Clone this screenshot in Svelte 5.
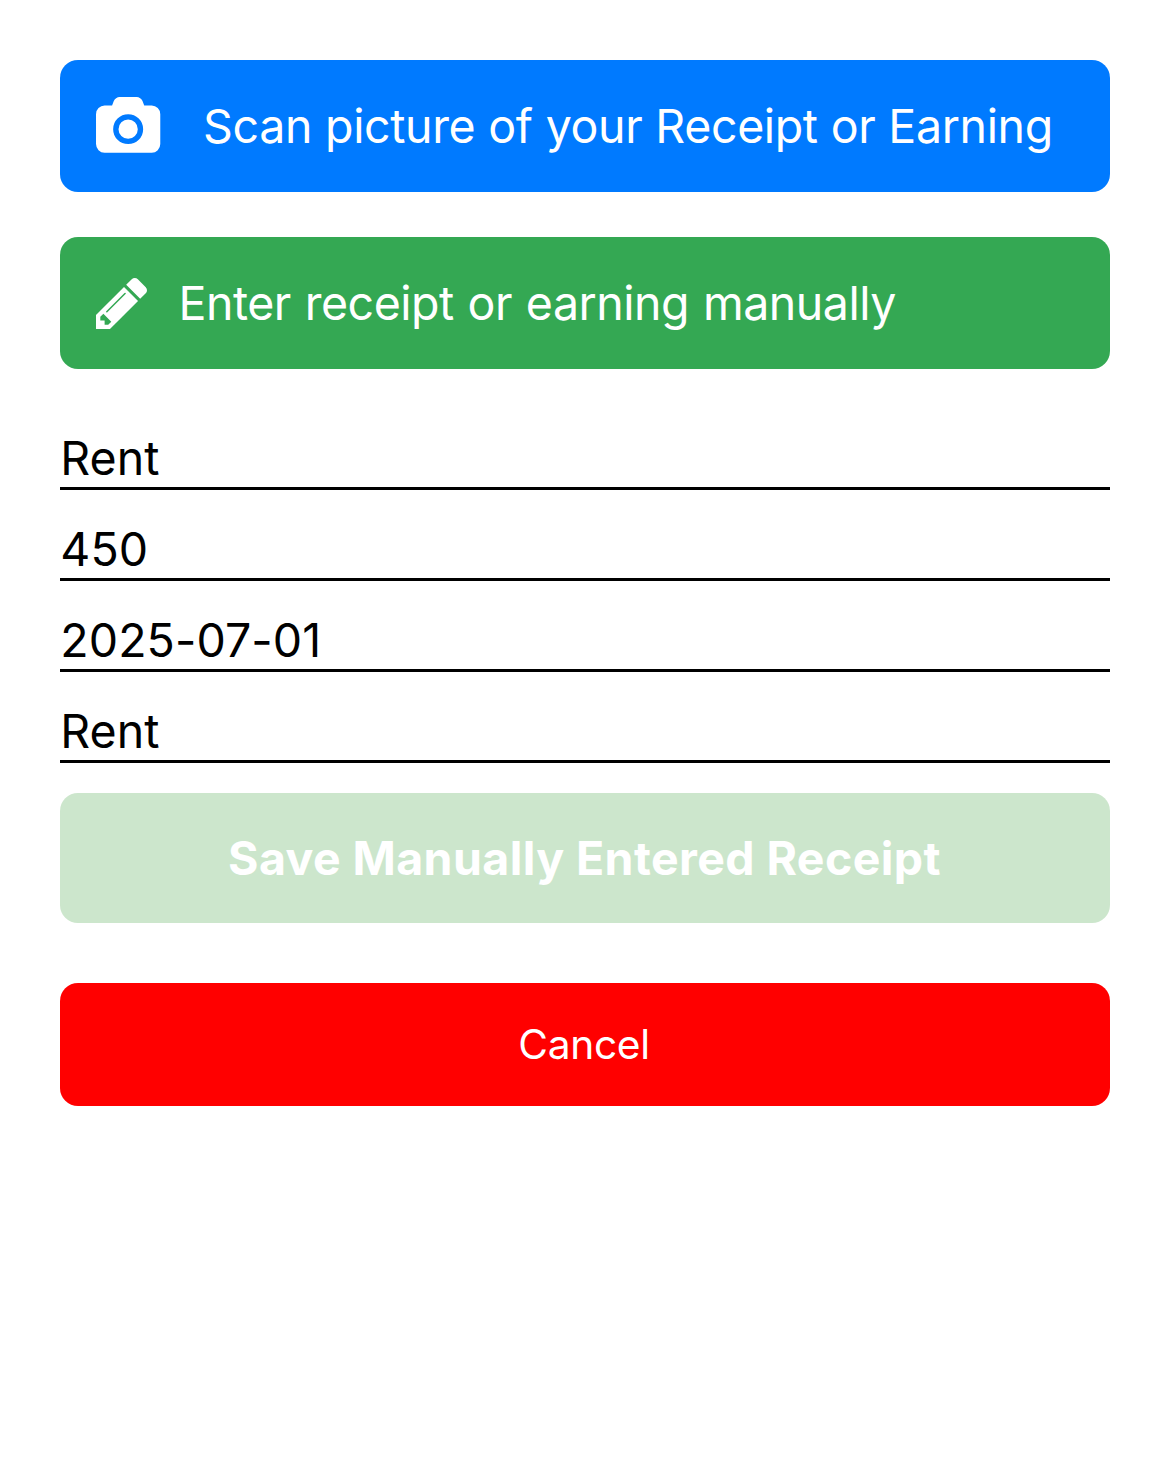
<script>
  const fields = ['Rent', '450', '2025-07-01', 'Rent'];
</script>

<main>
  <button class="action scan">
    <svg class="camera" viewBox="0 0 1920 1664" aria-hidden="true"><path fill-rule="evenodd" d="M960 672q119 0 203.500 84.500t84.500 203.500-84.500 203.500-203.500 84.500-203.500-84.500-84.500-203.500 84.500-203.500 203.500-84.500zM1664 256q106 0 181 75t75 181v896q0 106-75 181t-181 75h-1408q-106 0-181-75t-75-181v-896q0-106 75-181t181-75h224l51-136q19-49 69.500-84.500t103.500-35.500h512q53 0 103.500 35.500t69.500 84.500l51 136h224zM960 1408q185 0 316.500-131.500t131.500-316.500-131.500-316.500-316.500-131.500-316.500 131.500-131.500 316.500 131.500 316.500 316.500 131.500z" /></svg>
    <span>Scan picture of your Receipt or Earning</span>
  </button>
  <button class="action manual">
    <svg class="pencil" viewBox="128 149 1515 1515" aria-hidden="true"><path d="M491 1536l91-91-235-235-91 91v107h128v128h107zm523-928q0-22-22-22-10 0-17 7l-542 542q-7 7-7 17 0 22 22 22 10 0 17-7l542-542q7-7 7-17zm-54-192l416 416-832 832h-416v-416zm683 96q0 53-37 90l-166 166-416-416 166-165q36-38 90-38 53 0 91 38l235 234q37 39 37 91z" /></svg>
    <span>Enter receipt or earning manually</span>
  </button>
  <div class="fields">
    {#each fields as value}
      <div class="field"><span>{value}</span></div>
    {/each}
  </div>
  <button class="save"><span>Save Manually Entered Receipt</span></button>
  <button class="cancel"><span>Cancel</span></button>
</main>

<style>
  :global(body) { margin: 0; background: #fff; }
  main {
    box-sizing: border-box;
    padding: 60px;
    font-family: Inter, 'Liberation Sans', sans-serif;
  }
  button {
    display: flex;
    align-items: center;
    justify-content: center;
    box-sizing: border-box;
    width: 100%;
    border: 0;
    border-radius: 18px;
    padding: 0;
    color: #fff;
    font-family: inherit;
    font-size: 46.5px;
    white-space: nowrap;
  }
  svg { display: block; flex: none; fill: #fff; overflow: visible; }
  .action { justify-content: flex-start; height: 132px; padding-left: 36px; }
  .scan { background: #007aff; margin-bottom: 45px; letter-spacing: -0.37px; word-spacing: 0.3px; }
  .manual { background: #34a853; letter-spacing: -0.48px; word-spacing: 1.2px; }
  .camera { width: 64.3px; height: 55.7px; margin: 0 42.8px 3px 0; }
  .pencil { width: 51px; height: 51px; margin: 1px 31.5px 0 0; }
  .fields { display: grid; gap: 30px; padding-top: 60px; }
  .field {
    display: flex;
    align-items: center;
    box-sizing: border-box;
    height: 61px;
    padding: 1px 0 0 0.3px;
    border-bottom: 3px solid #000;
    color: #000;
    font-size: 46.5px;
    line-height: 57px;
    letter-spacing: 0.08px;
  }
  .save { height: 130px; margin-top: 30px; padding-right: 1px; background: #cce6cc; font-weight: 700; letter-spacing: 0.4px; }
  .cancel { height: 123px; margin-top: 60px; padding-right: 2px; background: #f00; font-size: 40.7px; letter-spacing: -0.35px; }
</style>
